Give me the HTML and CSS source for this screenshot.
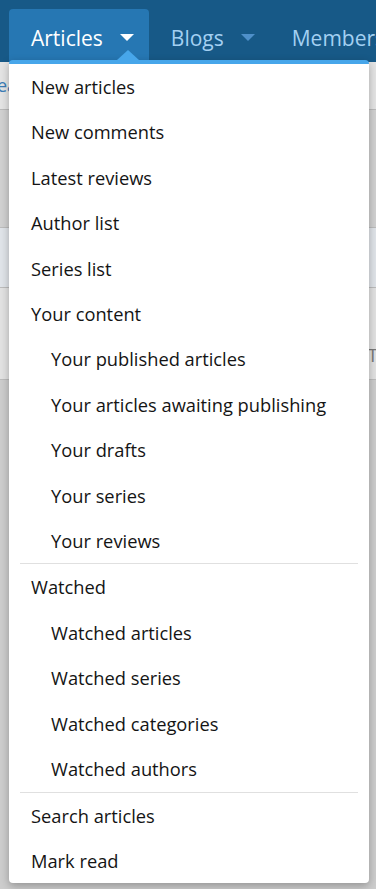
FILE: index.html
```html
<!DOCTYPE html>
<html lang="en">
<head>
    <meta charset="UTF-8">
    <title>Articles menu</title>
    <link rel="stylesheet" href="styles.css">
</head>
<body>
<header class="main-nav">
    <a class="nav-tab is-active" href="#">Articles <span class="caret"></span></a>
    <a class="nav-tab" href="#">Blogs <span class="caret"></span></a>
    <a class="nav-tab" href="#">Members</a>
</header>
<div class="page">
    <div class="sub-nav"><a href="#">ea</a></div>
    <div class="block block-dark"></div>
    <div class="block block-blue"></div>
    <div class="block block-light"><span class="cut-text">T</span></div>
</div>

<nav class="menu" aria-label="Articles menu">
    <span class="menu-pointer"></span>
    <a class="menu-link" href="#">New articles</a>
    <a class="menu-link" href="#">New comments</a>
    <a class="menu-link" href="#">Latest reviews</a>
    <a class="menu-link" href="#">Author list</a>
    <a class="menu-link" href="#">Series list</a>
    <a class="menu-link" href="#">Your content</a>
    <a class="menu-link sub" href="#">Your published articles</a>
    <a class="menu-link sub" href="#">Your articles awaiting publishing</a>
    <a class="menu-link sub" href="#">Your drafts</a>
    <a class="menu-link sub" href="#">Your series</a>
    <a class="menu-link sub" href="#">Your reviews</a>
    <hr class="menu-sep">
    <a class="menu-link" href="#">Watched</a>
    <a class="menu-link sub" href="#">Watched articles</a>
    <a class="menu-link sub" href="#">Watched series</a>
    <a class="menu-link sub" href="#">Watched categories</a>
    <a class="menu-link sub" href="#">Watched authors</a>
    <hr class="menu-sep">
    <a class="menu-link" href="#">Search articles</a>
    <a class="menu-link" href="#">Mark read</a>
</nav>
</body>
</html>
```

FILE: styles.css
```css
body {
    background: #cdcdcd;
    font-family: "Open Sans", "Noto Sans", sans-serif;
    height: 889px;
    margin: 0;
    overflow: hidden;
    position: relative;
}

a {
    text-decoration: none;
}

.main-nav {
    background: #175987;
    box-sizing: border-box;
    display: flex;
    height: 62px;
    overflow: hidden;
    padding: 9px 0 0 9px;
    white-space: nowrap;
}

.nav-tab {
    align-items: center;
    border-radius: 4px 4px 0 0;
    color: #a3d0f2;
    display: flex;
    font-size: 21px;
    padding: 4px 15px 0 22px;
}

.nav-tab.is-active {
    background: #2677b3;
    color: #fff;
}

.caret {
    border-left: 7px solid transparent;
    border-right: 7px solid transparent;
    border-top: 7px solid #4f90c9;
    height: 0;
    margin-left: 17px;
    width: 0;
}

.is-active .caret {
    border-top-color: #fff;
}

.sub-nav {
    background: #e4e4e4;
    border-bottom: 1px solid #bababa;
    height: 47px;
    line-height: 47px;
    overflow: hidden;
}

.sub-nav a {
    color: #3b7cb6;
    font-size: 18px;
    margin-left: -3px;
}

.block {
    border-bottom: 1px solid #bcbcbc;
}

.block-dark {
    background: #d1d1d1;
    height: 117px;
}

.block-blue {
    background: #e0e4e9;
    height: 59px;
}

.block-light {
    background: #e2e2e2;
    color: #7a7a7a;
    font-size: 19px;
    height: 91px;
    line-height: 134px;
    overflow: hidden;
    text-align: right;
}

.cut-text {
    margin-right: -2px;
}

.menu {
    background: #fff;
    border-radius: 4px;
    border-top: 4px solid #47a6ea;
    box-shadow: 0 3px 9px rgba(0, 0, 0, 0.28);
    display: flex;
    flex-direction: column;
    left: 9px;
    position: absolute;
    top: 60px;
    width: 360px;
}

.menu-pointer {
    border-bottom: 10px solid #47a6ea;
    border-left: 11px solid transparent;
    border-right: 11px solid transparent;
    height: 0;
    left: 108px;
    position: absolute;
    top: -14px;
    width: 0;
}

.menu-link {
    color: #141414;
    font-size: 18.3px;
    line-height: 27.4px;
    padding: 9px 22px;
}

.menu-link.sub {
    padding-left: 42px;
}

.menu-sep {
    border: 0;
    border-top: 1px solid #e0e0e0;
    margin: 0 11px;
}
```
